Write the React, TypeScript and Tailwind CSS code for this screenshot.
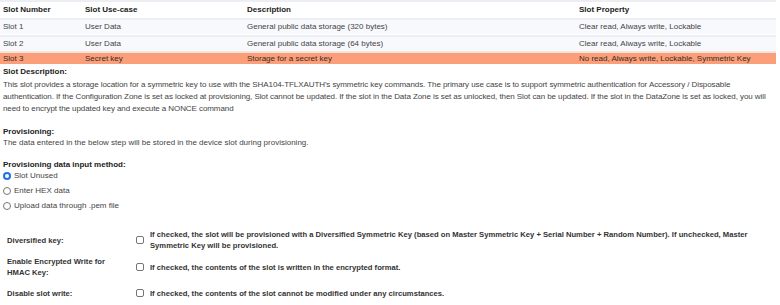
import React from 'react';

const rows = [
    { slot: 'Slot 1', use: 'User Data', desc: 'General public data storage (320 bytes)', prop: 'Clear read, Always write, Lockable', active: false },
    { slot: 'Slot 2', use: 'User Data', desc: 'General public data storage (64 bytes)', prop: 'Clear read, Always write, Lockable', active: false },
    { slot: 'Slot 3', use: 'Secret key', desc: 'Storage for a secret key', prop: 'No read, Always write, Lockable, Symmetric Key', active: true },
];

const Radio: React.FC<{ checked?: boolean; label: string }> = ({ checked, label }) => (
    <label className="flex items-center gap-[3px] h-[11px]">
        {checked ? (
            <span className="w-[8px] h-[8px] rounded-full bg-[#1a73e8] flex items-center justify-center">
                <span className="w-[4px] h-[4px] rounded-full bg-white" />
            </span>
        ) : (
            <span className="w-[8px] h-[8px] rounded-full border border-[#767676] bg-white" />
        )}
        <span>{label}</span>
    </label>
);

const Check: React.FC = () => (
    <span className="shrink-0 w-[8px] h-[8px] rounded-[2px] border border-[#767676] bg-white" />
);

const Option: React.FC<{ label: React.ReactNode; text: React.ReactNode; className?: string }> = ({ label, text, className }) => (
    <div className={`grid grid-cols-[136px_1fr] items-center ${className ?? ''}`}>
        <div className="pl-[7px] leading-[11px]">{label}</div>
        <div className="flex items-center gap-[6px] pr-[20px]">
            <Check />
            <div className="leading-[11px]">{text}</div>
        </div>
    </div>
);

export default function App() {
    return (
        <div className="w-[780px] h-[305px] overflow-hidden bg-white text-[#333] text-[8px] font-['Liberation_Sans',Arial,sans-serif]">
            <div className="pr-[4px]">
                <div className="border-t-2 border-[#eceef3]">
                    <div className="grid grid-cols-[82px_162px_332px_1fr] h-[15px] items-center bg-white font-bold text-[#222] pl-[3px]">
                        <div>Slot Number</div>
                        <div>Slot Use-case</div>
                        <div>Description</div>
                        <div>Slot Property</div>
                    </div>
                    {rows.map((r) => (
                        <div
                            key={r.slot}
                            className={`grid grid-cols-[82px_162px_332px_1fr] items-center pl-[3px] border-t-2 ${
                                r.active ? 'h-[13px] bg-[#fb9f7a] border-[#f6e3dc] text-[#3a2a22]' : 'h-[16px] mt-[1px] bg-[#f8f9fc] border-[#eceef3] text-[#444]'
                            }`}
                        >
                            <div>{r.slot}</div>
                            <div>{r.use}</div>
                            <div>{r.desc}</div>
                            <div>{r.prop}</div>
                        </div>
                    ))}
                </div>
            </div>

            <div className="pl-[3px] mt-[1px]">
                <div className="font-bold text-[#222] leading-[14px]">Slot Description:</div>
                <p className="leading-[12px] text-[#444] tracking-[-0.01em]">
                    This slot provides a storage location for a symmetric key to use with the SHA104-TFLXAUTH's symmetric key commands. The primary use case is to support symmetric authentication for Accessory / Disposable authentication. If the Configuration Zone is set as locked at provisioning, Slot cannot be updated. If the slot in the Data Zone is set as unlocked, then Slot can be updated. If the slot in the DataZone is set as locked, you will need to encrypt the updated key and execute a NONCE command
                </p>

                <div className="mt-[11px] font-bold text-[#222] leading-[11px]">Provisioning:</div>
                <p className="leading-[11px] text-[#444]">The data entered in the below step will be stored in the device slot during provisioning.</p>

                <div className="mt-[11px] font-bold text-[#222] leading-[11px]">Provisioning data input method:</div>
                <div className="flex flex-col gap-[4px] text-[#444]">
                    <Radio checked label="Slot Unused" />
                    <Radio label="Enter HEX data" />
                    <Radio label="Upload data through .pem file" />
                </div>
            </div>

            <div className="mt-[17px] text-[7.65px] font-bold text-[#333]">
                <Option
                    className="h-[24px]"
                    label="Diversified key:"
                    text="If checked, the slot will be provisioned with a Diversified Symmetric Key (based on Master Symmetric Key + Serial Number + Random Number). If unchecked, Master Symmetric Key will be provisioned."
                />
                <Option
                    className="h-[22px] mt-[4px]"
                    label={<>Enable Encrypted Write for<br />HMAC Key:</>}
                    text="If checked, the contents of the slot is written in the encrypted format."
                />
                <Option
                    className="h-[14px] mt-[8px]"
                    label="Disable slot write:"
                    text="If checked, the contents of the slot cannot be modified under any circumstances."
                />
            </div>
        </div>
    );
}
